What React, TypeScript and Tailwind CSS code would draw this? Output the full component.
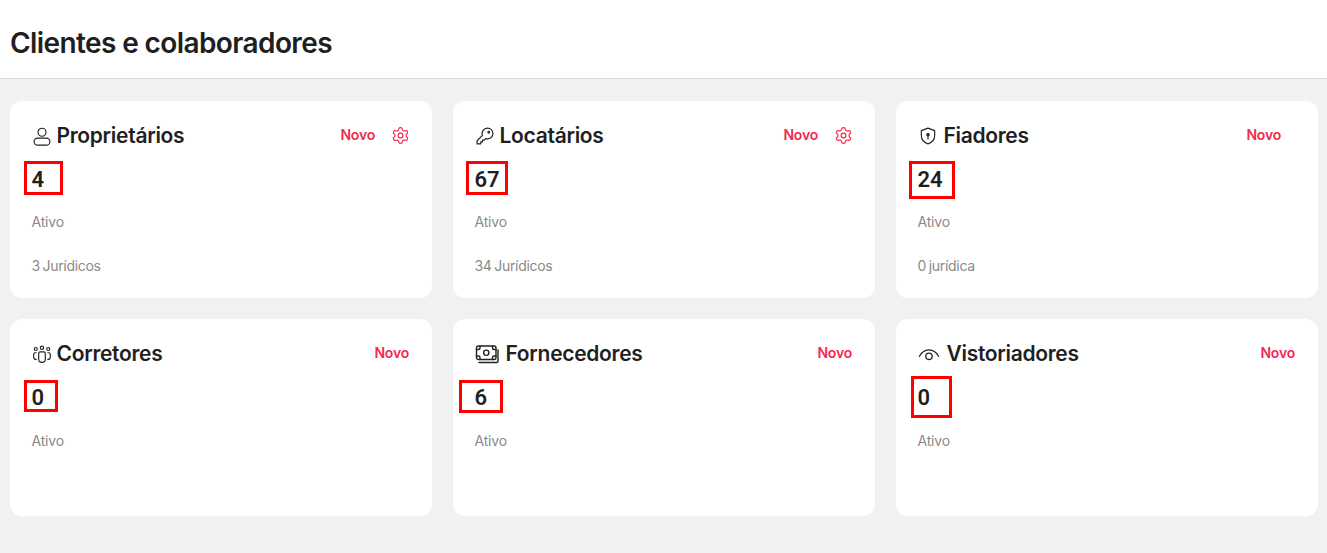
import { FC, ReactNode } from 'react';
import { Settings } from 'lucide-react';

type CardProps = {
  icon: ReactNode;
  title: string;
  count: number;
  footer?: string;
  hasSettings?: boolean;
  novoClass: string;
  markClass: string;
};

const iconProps = {
  fill: 'none',
  viewBox: '0 0 24 24',
  stroke: 'currentColor',
  strokeWidth: 1.4,
  strokeLinecap: 'round' as const,
  strokeLinejoin: 'round' as const,
  className: 'w-[20px] h-[20px] text-[#222] shrink-0',
};

const UserIcon = () => (
  <svg {...iconProps}>
    <circle cx="12" cy="7.500" r="4.800" />
    <rect x="2.500" y="14.500" width="19" height="8.500" rx="4.250" />
  </svg>
);

const KeyIcon = () => (
  <svg {...iconProps}>
    <path d="M15 2.500a6.500 6.500 0 0 1 0 13c-.8 0-1.500-.15-2.200-.4L11 17H9v2H7v2.200l-.5.3H2.500v-3.800l6.400-6.500A6.500 6.500 0 0 1 15 2.500z" />
    <circle cx="16.500" cy="7.500" r="1" />
  </svg>
);

const ShieldIcon = () => (
  <svg {...iconProps} className="w-[20px] h-[20px] mr-[1px] text-[#222] shrink-0">
    <path d="M12 2.500l8 3v6c0 5-3.400 8.500-8 10-4.600-1.500-8-5-8-10v-6l8-3z" />
    <circle cx="12" cy="10.500" r="1.400" fill="currentColor" />
    <path d="M12 11.500v4" />
  </svg>
);

const PeopleIcon = () => (
  <svg {...iconProps}>
    <circle cx="12" cy="4.500" r="2" />
    <circle cx="4.500" cy="6" r="1.800" />
    <circle cx="19.500" cy="6" r="1.800" />
    <path d="M8 11.500a2 2 0 0 1 2-2h4a2 2 0 0 1 2 2v7a3.500 3.500 0 0 1-3.500 3.500h-1A3.500 3.500 0 0 1 8 18.500v-7z" />
    <path d="M5 10.500H4a2 2 0 0 0-2 2v3a3 3 0 0 0 3 3" />
    <path d="M19 10.500h1a2 2 0 0 1 2 2v3a3 3 0 0 1-3 3" />
  </svg>
);

const MoneyIcon = () => (
  <svg {...iconProps} className="w-[24px] h-[24px] mr-[2px] text-[#222] shrink-0">
    <rect x="1.500" y="4" width="19.500" height="13.500" rx="2" />
    <circle cx="11.250" cy="10.750" r="2.600" />
    <path d="M1.500 7.500h2a1.500 1.500 0 0 0 1.500-1.500V4M21 7.500h-2A1.500 1.500 0 0 1 17.500 6V4M1.500 14h2A1.500 1.500 0 0 1 5 15.500v2M21 14h-2a1.500 1.500 0 0 0-1.500 1.500v2" />
    <path d="M4 20.500h17.500a1.500 1.500 0 0 0 1.500-1.500V8" />
  </svg>
);

const EyeIcon = () => (
  <svg {...iconProps} className="w-[22px] h-[22px] mr-[2px] text-[#222] shrink-0">
    <path d="M1.500 14.500C4 10 7.800 7.500 12 7.500s8 2.500 10.500 7" />
    <circle cx="12" cy="14.500" r="3.500" />
  </svg>
);

const Card: FC<CardProps> = ({ icon, title, count, footer, hasSettings, novoClass, markClass }) => {
  return (
    <div className="relative h-[197px] bg-white rounded-[12px] pl-[21.5px] pr-[22px] pt-[23px]">
      <div className="flex items-center h-[24px]">
        <div className="flex items-center gap-[5px]">
          {icon}
          <span className="text-[21px] font-semibold text-[#1f1f1f] tracking-[-0.3px]">{title}</span>
        </div>
        <span className={`ml-auto text-[14px] font-semibold text-[#f5284f] tracking-[-0.2px] relative -top-[2px] ${novoClass}`}>Novo</span>
        {hasSettings && <Settings className="w-[19px] h-[19px] ml-[16px] text-[#f5284f] relative -top-[1px]" strokeWidth={1.5} />}
      </div>
      <div className="mt-[20px] font-['Roboto',sans-serif] text-[22px] leading-[24px] font-semibold text-[#1f1f1f]">{count}</div>
      <div className={`${footer ? 'mt-[20px]' : 'mt-[21px]'} text-[14px] leading-[20px] text-[#8a8a8a] tracking-[-0.2px]`}>Ativo</div>
      {footer && <div className="mt-[24px] text-[14px] leading-[20px] text-[#8a8a8a] tracking-[-0.3px] [word-spacing:-1px]">{footer}</div>}
      <div className={`absolute border-[3px] border-[#ff0000] ${markClass}`} />
    </div>
  );
};

export default function App() {
  return (
    <div className="min-h-[553px] bg-[#f1f1f1] font-['Inter','Liberation_Sans',sans-serif]">
      <header className="flex items-center h-[79px] pl-[10px] pt-[7px] bg-white border-b border-[#d9d9d9]">
        <h1 className="text-[28px] font-semibold text-[#1f1f1f] tracking-[-0.6px]">Clientes e colaboradores</h1>
      </header>
      <main className="grid grid-cols-3 gap-[21px] pt-[22px] pl-[10px] pr-[9px]">
        <Card icon={<UserIcon />} title="Proprietários" count={4} footer="3 Jurídicos" hasSettings novoClass="" markClass="left-[14px] top-[60px] w-[39px] h-[34px]" />
        <Card icon={<KeyIcon />} title="Locatários" count={67} footer="34 Jurídicos" hasSettings novoClass="" markClass="left-[13px] top-[60px] w-[42px] h-[34px]" />
        <Card icon={<ShieldIcon />} title="Fiadores" count={24} footer="0 jurídica" novoClass="mr-[15px]" markClass="left-[13px] top-[60px] w-[46px] h-[38px]" />
        <Card icon={<PeopleIcon />} title="Corretores" count={0} novoClass="mr-[1px]" markClass="left-[14px] top-[61px] w-[34px] h-[32px]" />
        <Card icon={<MoneyIcon />} title="Fornecedores" count={6} novoClass="mr-[1px]" markClass="left-[6px] top-[61px] w-[44px] h-[33px]" />
        <Card icon={<EyeIcon />} title="Vistoriadores" count={0} novoClass="mr-[1px]" markClass="left-[15px] top-[57px] w-[41px] h-[42px]" />
      </main>
    </div>
  );
}
